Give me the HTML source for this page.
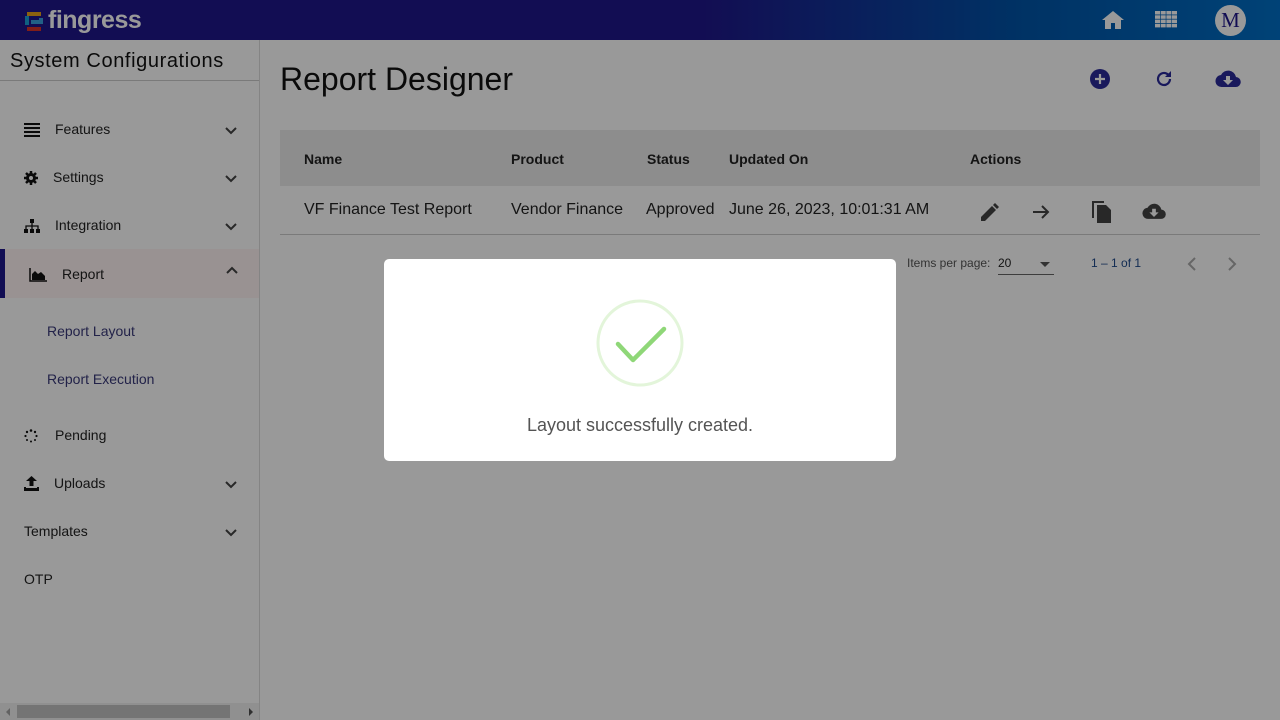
<!DOCTYPE html>
<html><head><style>
*{margin:0;padding:0;box-sizing:border-box}
body{width:1280px;height:720px;overflow:hidden;font-family:"Liberation Sans",sans-serif;background:#fff;position:relative;color:#212121}
.hdr{position:absolute;left:0;top:0;width:1280px;height:40px;background:linear-gradient(90deg,#1f178a 0%,#1f178a 55%,#0055a8 80%,#006fc6 100%)}
.side{position:absolute;left:0;top:40px;width:260px;height:680px;border-right:1px solid #ddd;background:#fff}
.side .t{position:absolute;left:10px;top:10px;font-size:20px;letter-spacing:.6px;color:#111}
.side .ln{position:absolute;left:0;top:40px;width:259px;border-top:1px solid #ccc}
.mi{position:absolute;left:0;width:259px;height:48px;font-size:14px;color:#222}
.mi span{position:absolute;top:16px}
.mi svg.i{position:absolute;left:24px;top:18px}
.chev{position:absolute;left:224px;top:21px}
.sub{position:absolute;left:47px;font-size:14px;color:#3a3a7a}
h1{position:absolute;left:280px;top:61px;font-size:32px;font-weight:normal;color:#111}
.th{position:absolute;left:280px;top:130px;width:980px;height:56px;background:#ececec;font-size:14px;font-weight:bold;color:#222}
.th span,.tr span{position:absolute}
.tr{position:absolute;left:280px;top:187px;width:980px;height:48px;border-bottom:1px solid #ccc;font-size:16px;color:#222}
.ov{position:absolute;left:0;top:0;width:1280px;height:720px;background:rgba(0,0,0,.4)}
.modal{position:absolute;left:384px;top:259px;width:512px;height:202px;background:#fff;border-radius:5px}
</style></head><body>
<div class="hdr">
 <svg style="position:absolute;left:25px;top:12px" width="20" height="20" viewBox="0 0 20 20"><path d="M2 2h14" stroke="#e8a21a" stroke-width="4"/><path d="M2 4v9" stroke="#1aa0d8" stroke-width="4"/><path d="M6 10h10v-4" stroke="#3aa0e0" stroke-width="4" fill="none"/><path d="M2 17h14" stroke="#d8322a" stroke-width="4"/></svg>
 <div style="position:absolute;left:48px;top:6px;font-size:25px;font-weight:bold;color:#fff;letter-spacing:-.5px">fingress</div>
 <svg style="position:absolute;left:1102px;top:11px" width="22" height="18" viewBox="0 0 22 18"><path d="M11 0L0 9h3v9h6v-6h4v6h6V9h3z" fill="#fff"/></svg>
 <svg style="position:absolute;left:1155px;top:11px" width="22" height="17" viewBox="0 0 22 17" fill="#fff"><rect x="0" y="0" width="5" height="3.5"/><rect x="5.7" y="0" width="5" height="3.5"/><rect x="11.4" y="0" width="5" height="3.5"/><rect x="17" y="0" width="5" height="3.5"/><rect x="0" y="4.3" width="5" height="3.5"/><rect x="5.7" y="4.3" width="5" height="3.5"/><rect x="11.4" y="4.3" width="5" height="3.5"/><rect x="17" y="4.3" width="5" height="3.5"/><rect x="0" y="8.6" width="5" height="3.5"/><rect x="5.7" y="8.6" width="5" height="3.5"/><rect x="11.4" y="8.6" width="5" height="3.5"/><rect x="17" y="8.6" width="5" height="3.5"/><rect x="0" y="12.9" width="5" height="3.5"/><rect x="5.7" y="12.9" width="5" height="3.5"/><rect x="11.4" y="12.9" width="5" height="3.5"/><rect x="17" y="12.9" width="5" height="3.5"/></svg>
 <div style="position:absolute;left:1215px;top:5px;width:31px;height:31px;border-radius:50%;background:#fff;color:#1f178a;font-family:'Liberation Serif',serif;font-size:21px;text-align:center;line-height:31px">M</div>
</div>
<div class="side">
 <div class="t">System Configurations</div><div class="ln"></div>
 <div class="mi" style="top:65px"><svg class="i" width="16" height="14" viewBox="0 0 16 14" fill="#111"><rect y="0" width="16" height="2"/><rect y="4" width="16" height="2"/><rect y="8" width="16" height="2"/><rect y="12" width="16" height="2"/></svg><span style="left:55px">Features</span><svg class="chev" width="14" height="10" viewBox="0 0 14 10"><path d="M2 2l5 5 5-5" stroke="#444" stroke-width="2" fill="none"/></svg></div>
 <div class="mi" style="top:113px"><svg class="i" width="14" height="14" viewBox="0 0 14 14"><circle cx="7" cy="7" r="5" fill="#111"/><path d="M7 0v14M0 7h14M2 2l10 10M12 2L2 12" stroke="#111" stroke-width="2.5"/><circle cx="7" cy="7" r="2" fill="#fff"/></svg><span style="left:53px">Settings</span><svg class="chev" width="14" height="10" viewBox="0 0 14 10"><path d="M2 2l5 5 5-5" stroke="#444" stroke-width="2" fill="none"/></svg></div>
 <div class="mi" style="top:161px"><svg class="i" width="16" height="14" viewBox="0 0 16 14" fill="#111"><rect x="6" y="0" width="4" height="4"/><rect x="0" y="10" width="4" height="4"/><rect x="6" y="10" width="4" height="4"/><rect x="12" y="10" width="4" height="4"/><path d="M8 4v6M2 10V7h12v3" stroke="#111" stroke-width="1.3" fill="none"/></svg><span style="left:55px">Integration</span><svg class="chev" width="14" height="10" viewBox="0 0 14 10"><path d="M2 2l5 5 5-5" stroke="#444" stroke-width="2" fill="none"/></svg></div>
 <div class="mi" style="top:209px;height:49px;background:#fff3f3;border-left:5px solid #1f178a"><svg class="i" style="left:24px;top:19px" width="18" height="14" viewBox="0 0 18 14"><path d="M1 0v13h17" stroke="#111" stroke-width="1.5" fill="none"/><path d="M3 12V6l3-3 3 3 3-2 4 4v4z" fill="#111"/></svg><span style="left:57px;top:17px">Report</span><svg class="chev" style="left:220px;top:17px" width="14" height="10" viewBox="0 0 14 10"><path d="M2 7l5-5 5 5" stroke="#444" stroke-width="2" fill="none"/></svg></div>
 <div class="sub" style="top:283px">Report Layout</div>
 <div class="sub" style="top:331px">Report Execution</div>
 <div class="mi" style="top:371px"><svg class="i" width="14" height="14" viewBox="0 0 14 14" fill="#111"><circle cx="7" cy="1.5" r="1.3"/><circle cx="11" cy="3" r="1.2"/><circle cx="12.5" cy="7" r="1.1"/><circle cx="11" cy="11" r="1"/><circle cx="7" cy="12.5" r="1"/><circle cx="3" cy="11" r="1"/><circle cx="1.5" cy="7" r="1.1"/><circle cx="3" cy="3" r="1.2"/></svg><span style="left:55px">Pending</span></div>
 <div class="mi" style="top:419px"><svg class="i" style="top:17px" width="15" height="15" viewBox="0 0 15 15" fill="#111"><path d="M7.5 0L2 5h3.5v5h4V5H13z"/><path d="M0 11h2v2h11v-2h2v4H0z"/><rect x="0" y="12" width="15" height="3"/></svg><span style="left:54px">Uploads</span><svg class="chev" width="14" height="10" viewBox="0 0 14 10"><path d="M2 2l5 5 5-5" stroke="#444" stroke-width="2" fill="none"/></svg></div>
 <div class="mi" style="top:467px"><span style="left:24px">Templates</span><svg class="chev" width="14" height="10" viewBox="0 0 14 10"><path d="M2 2l5 5 5-5" stroke="#444" stroke-width="2" fill="none"/></svg></div>
 <div class="mi" style="top:515px"><span style="left:24px">OTP</span></div>
 <div style="position:absolute;left:0;top:663px;width:259px;height:17px;background:#f1f1f1"></div>
 <div style="position:absolute;left:17px;top:665px;width:213px;height:13px;background:#c1c1c1"></div>
 <div style="position:absolute;left:6px;top:668px;border:4px solid transparent;border-right:4px solid #a3a3a3;border-left:0"></div>
 <div style="position:absolute;left:249px;top:668px;border:4px solid transparent;border-left:4px solid #505050;border-right:0"></div>
</div>
<h1>Report Designer</h1>
<svg style="position:absolute;left:1090px;top:69px" width="20" height="20" viewBox="0 0 20 20"><circle cx="10" cy="10" r="10" fill="#2a2a9a"/><path d="M10 5v10M5 10h10" stroke="#fff" stroke-width="2.2"/></svg>
<svg style="position:absolute;left:1155px;top:70px" width="18" height="18" viewBox="0 0 18 18"><path d="M15 9a6 6 0 1 1-2-4.5" stroke="#2a2a9a" stroke-width="2.2" fill="none"/><path d="M16 1v6h-6z" fill="#2a2a9a"/></svg>
<svg style="position:absolute;left:1215px;top:70px" width="26" height="18" viewBox="0 0 26 18"><path d="M21 7A8 8 0 0 0 6 5a6 6 0 0 0 1 12h13.5a5 5 0 0 0 .5-10z" fill="#2a2a9a"/><path d="M11 6h4v4h3l-5 5-5-5h3z" fill="#fff"/></svg>
<div class="th"><span style="left:24px;top:21px">Name</span><span style="left:231px;top:21px">Product</span><span style="left:367px;top:21px">Status</span><span style="left:449px;top:21px">Updated On</span><span style="left:690px;top:21px">Actions</span></div>
<div class="tr"><span style="left:24px;top:14px">VF Finance Test Report</span><span style="left:231px;top:14px">Vendor Finance</span><span style="left:366px;top:14px">Approved</span><span style="left:449px;top:14px">June 26, 2023, 10:01:31 AM</span>
<svg style="position:absolute;left:701px;top:16px" width="18" height="18" viewBox="0 0 18 18"><path d="M0 18v-4L11 3l4 4L4 18zM12 2l2-2 4 4-2 2z" fill="#444"/></svg>
<svg style="position:absolute;left:753px;top:17px" width="18" height="16" viewBox="0 0 18 16"><path d="M0 8h15M9 2l6 6-6 6" stroke="#444" stroke-width="2" fill="none"/></svg>
<svg style="position:absolute;left:812px;top:14px" width="20" height="22" viewBox="0 0 20 22"><path d="M1 17V1h11" stroke="#444" stroke-width="2" fill="none"/><path d="M5 4h9l5 5v13H5z" fill="#444"/></svg>
<svg style="position:absolute;left:862px;top:16px" width="24" height="17" viewBox="0 0 26 18"><path d="M21 7A8 8 0 0 0 6 5a6 6 0 0 0 1 12h13.5a5 5 0 0 0 .5-10z" fill="#444"/><path d="M11 6h4v4h3l-5 5-5-5h3z" fill="#fff"/></svg>
</div>
<div style="position:absolute;left:907px;top:256px;font-size:12px;color:#555">Items per page:</div>
<div style="position:absolute;left:998px;top:256px;font-size:12px;color:#222">20</div>
<div style="position:absolute;left:998px;top:274px;width:56px;border-top:1px solid #666"></div>
<div style="position:absolute;left:1040px;top:262px;border:5px solid transparent;border-top:5px solid #555;border-bottom:0"></div>
<div style="position:absolute;left:1091px;top:256px;font-size:12px;color:#1f4a8a">1 – 1 of 1</div>
<svg style="position:absolute;left:1186px;top:256px" width="12" height="16" viewBox="0 0 12 16"><path d="M9 2L3 8l6 6" stroke="#aaa" stroke-width="2" fill="none"/></svg>
<svg style="position:absolute;left:1226px;top:256px" width="12" height="16" viewBox="0 0 12 16"><path d="M3 2l6 6-6 6" stroke="#aaa" stroke-width="2" fill="none"/></svg>
<div class="ov"></div>
<div class="modal">
 <svg style="position:absolute;left:211px;top:39px" width="90" height="90" viewBox="0 0 90 90"><circle cx="45" cy="45" r="42" stroke="#e3f5da" stroke-width="3" fill="none"/><path d="M23 46l15 16 31-31" stroke="#8fd778" stroke-width="4.5" stroke-linecap="round" stroke-linejoin="round" fill="none"/></svg>
 <div style="position:absolute;left:0;top:156px;width:512px;text-align:center;font-size:18px;color:#545454">Layout successfully created.</div>
</div>
</body></html>
